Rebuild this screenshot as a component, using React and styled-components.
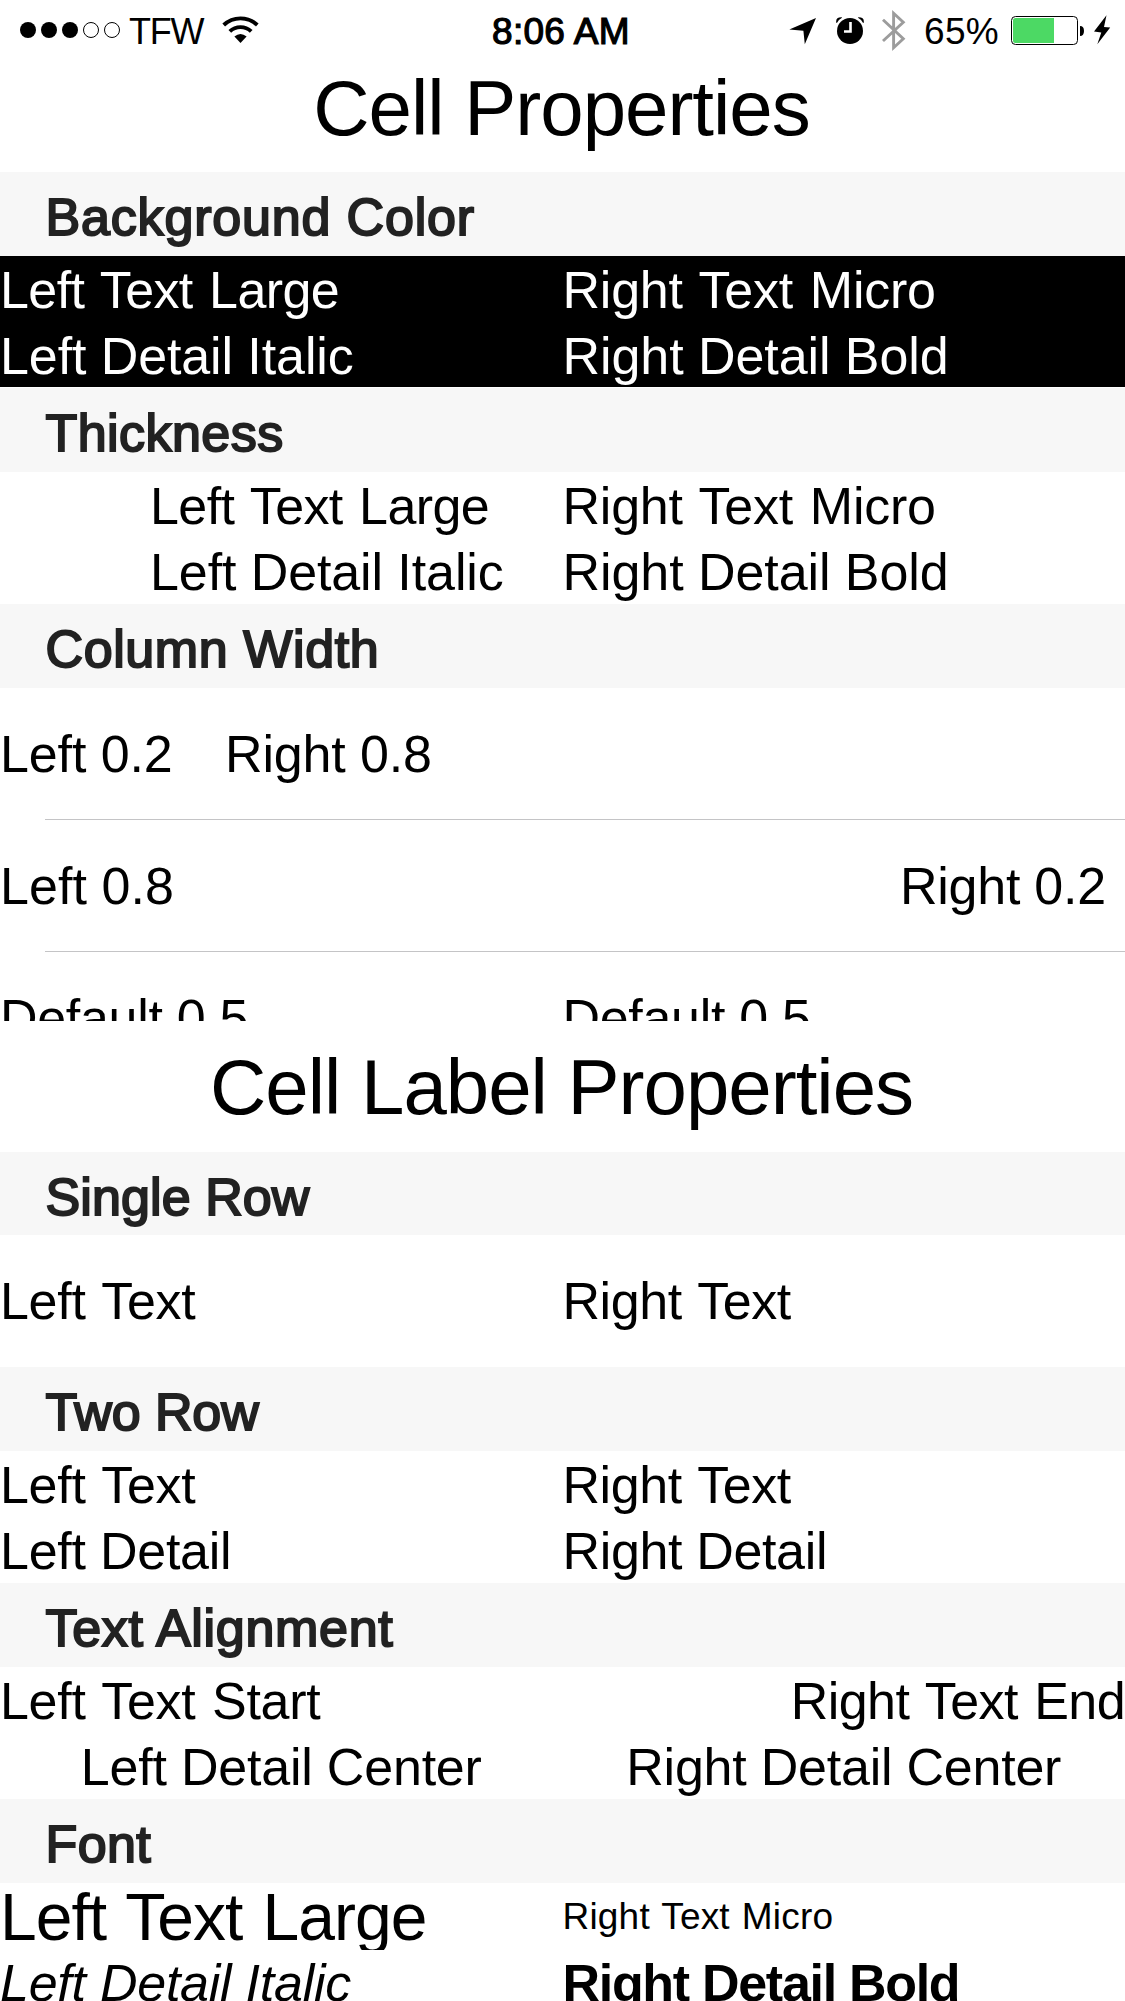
import React from "react";
import styled, { createGlobalStyle } from "styled-components";

const GlobalStyle = createGlobalStyle`
  * { box-sizing: border-box; }
  body {
    margin: 0;
    background: #fff;
    color: #000;
    font-family: "Liberation Sans", Arial, sans-serif;
  }
`;

const Screen = styled.main`
  width: 1125px;
  height: 2001px;
  overflow: hidden;
  background: #fff;
`;

/* ---------- status bar ---------- */

const StatusBar = styled.header`
  display: grid;
  grid-template-columns: 492px 1fr 336px;
  height: 60px;
`;

const StatusGroup = styled.div`
  display: flex;
  align-items: flex-start;
  padding-left: ${(p) => p.$start || 0}px;
`;

const StatusText = styled.span`
  padding-top: 2px;
  margin: 0 ${(p) => p.$after || 0}px 0 0;
  font-size: ${(p) => p.$size || 37}px;
  line-height: 60px;
  -webkit-text-stroke: ${(p) => (p.$medium ? 1.2 : 0)}px currentColor;
  letter-spacing: ${(p) => p.$track || 0}px;
  white-space: nowrap;
`;

const Glyph = styled.svg`
  display: block;
  flex: none;
  height: 60px;
  margin-right: ${(p) => p.$after || 0}px;
`;

function Icon({ x, width, after, children }) {
  return (
    <Glyph width={width} viewBox={`${x} 0 ${width} 60`} $after={after}>
      {children}
    </Glyph>
  );
}

function Signal() {
  return (
    <Icon x={20} width={101} after={8}>
      {[28, 49, 70].map((cx) => (
        <circle key={cx} cx={cx} cy="30" r="8" />
      ))}
      {[91, 112].map((cx) => (
        <circle key={cx} cx={cx} cy="30" r="7.5" fill="none" stroke="#000" strokeWidth="1" />
      ))}
    </Icon>
  );
}

function Wifi() {
  return (
    <Icon x={221} width={39}>
      <path
        d="M223.7 25A24.5 24.5 0 0 1 257.3 25M229.8 31.4A15.5 15.5 0 0 1 251.2 31.4"
        fill="none"
        stroke="#000"
        strokeWidth="3.9"
      />
      <path d="M234.4 36.6Q240.5 31.6 246.6 36.6L240.5 43Z" />
    </Icon>
  );
}

function LocationArrow() {
  return (
    <Icon x={789} width={28} after={19}>
      <path d="M816 18L789.3 29.6L803.4 30.7L804.8 44.2Z" />
    </Icon>
  );
}

function Alarm() {
  return (
    <Icon x={836} width={29} after={17}>
      <circle cx="850" cy="31" r="13" />
      <path d="M836.3 22.7Q835.3 17 841.7 17.2L842 17.8Q838.5 19.7 836.9 22.9ZM863.7 22.7Q864.7 17 858.3 17.2L858 17.8Q861.5 19.7 863.1 22.9Z" />
      <path d="M850.5 22V31.5H844" fill="none" stroke="#fff" strokeWidth="2.6" />
    </Icon>
  );
}

function Bluetooth() {
  return (
    <Icon x={882} width={24} after={18}>
      <path
        d="M883 19.7L903.3 38.8L893.6 47.8V13.2L903.3 22.2L883 41"
        fill="none"
        stroke="#9c9c9c"
        strokeWidth="2.9"
      />
    </Icon>
  );
}

function Battery() {
  return (
    <Icon x={1011} width={74} after={9}>
      <rect x="1011.5" y="16.5" width="66" height="28" rx="4" fill="#fff" stroke="#000" strokeWidth="1" />
      <path d="M1015.5 18H1054V43H1015.5Q1013 43 1013 40.5V20.5Q1013 18 1015.5 18Z" fill="#4cd964" />
      <path d="M1080 26Q1084 26 1084 31Q1084 36 1080 36Z" />
    </Icon>
  );
}

function Bolt() {
  return (
    <Icon x={1094} width={17}>
      <path d="M1106.5 15.2L1094 31.5L1101.3 32.6L1097.3 44.3L1110.2 27.6L1104 27Z" />
    </Icon>
  );
}

/* ---------- tables ---------- */

const Pane = styled.section`
  height: ${(p) => p.$height}px;
  overflow: hidden;
`;

const Title = styled.h1`
  margin: 0;
  height: ${(p) => p.$height}px;
  line-height: ${(p) => p.$line}px;
  font-size: 78px;
  font-weight: 400;
  letter-spacing: -1px;
  text-indent: -2px;
  text-align: center;
  white-space: nowrap;
`;

const SectionHeader = styled.h2`
  margin: 0;
  height: ${(p) => p.$height || 84}px;
  padding: 3px 0 0 45.5px;
  background: #f7f7f7;
  color: #222;
  font-size: 52px;
  line-height: 84px;
  font-weight: 400;
  -webkit-text-stroke: 2px currentColor;
  letter-spacing: ${(p) => (p.$track === undefined ? 0.5 : p.$track)}px;
  white-space: nowrap;
`;

const Row = styled.div`
  display: grid;
  grid-template-columns: ${(p) => p.$left || 0.5}fr ${(p) => 1 - (p.$left || 0.5)}fr;
  height: 132px;
  padding-left: ${(p) => p.$inset || 0}px;
  background: #fff;
`;

const InvertedRow = styled(Row)`
  background: #000;
  color: #fff;
  border-bottom: 1px solid #fff;
`;

const InsetRow = styled(Row)`
  grid-template-columns: 412.5px 1fr;
`;

const Divider = styled.hr`
  position: relative;
  height: 1px;
  margin: -1px 0 0 45px;
  border: 0;
  background: #c4c4c6;
`;

const Cell = styled.div`
  display: flex;
  flex-direction: column;
  padding-top: ${(p) => (p.$single ? 0 : 1)}px;
  min-width: 0;
`;

const Label = styled.span`
  display: block;
  height: ${(p) => p.$height || 66}px;
  overflow: ${(p) => (p.$clip ? "hidden" : "visible")};
  font-size: ${(p) => p.$size || 52}px;
  line-height: ${(p) => p.$height || 66}px;
  font-weight: ${(p) => (p.$bold ? 700 : 400)};
  font-style: ${(p) => (p.$italic ? "italic" : "normal")};
  letter-spacing: ${(p) => (p.$track === undefined ? -0.25 : p.$track)}px;
  word-spacing: ${(p) => p.$gap || 0}px;
  text-align: ${(p) => p.$align || "left"};
  white-space: nowrap;
`;

const Detail = styled(Label)`
  height: 65px;
  line-height: 67px;
`;

function Single({ children, track, gap }) {
  return (
    <Cell $single>
      <Label $height={132} $track={track} $gap={gap}>{children}</Label>
    </Cell>
  );
}

export default function App() {
  return (
    <>
      <GlobalStyle />
      <Screen>
        <Pane $height={1021}>
          <StatusBar>
            <StatusGroup $start={20}>
              <Signal />
              <StatusText $size={36} $track={-1.3} $after={18}>TFW</StatusText>
              <Wifi />
            </StatusGroup>
            <StatusGroup>
              <StatusText $medium $track={0.3}>8:06 AM</StatusText>
            </StatusGroup>
            <StatusGroup>
              <LocationArrow />
              <Alarm />
              <Bluetooth />
              <StatusText $track={0.3} $after={12}>65%</StatusText>
              <Battery />
              <Bolt />
            </StatusGroup>
          </StatusBar>

          <Title $height={112} $line={96}>Cell Properties</Title>

          <SectionHeader $track={0.83}>Background Color</SectionHeader>
          <InvertedRow>
            <Cell>
              <Label $gap={2.5} $track={-0.6}>Left Text Large</Label>
              <Detail $track={-0.1}>Left Detail Italic</Detail>
            </Cell>
            <Cell>
              <Label $gap={2.5} $track={-0.22}>Right Text Micro</Label>
              <Detail $track={-0.07}>Right Detail Bold</Detail>
            </Cell>
          </InvertedRow>

          <SectionHeader $track={0.45}>Thickness</SectionHeader>
          <InsetRow $inset={150}>
            <Cell>
              <Label $gap={2.5} $track={-0.6}>Left Text Large</Label>
              <Detail $track={-0.1}>Left Detail Italic</Detail>
            </Cell>
            <Cell>
              <Label $gap={2.5} $track={-0.22}>Right Text Micro</Label>
              <Detail $track={-0.07}>Right Detail Bold</Detail>
            </Cell>
          </InsetRow>

          <SectionHeader $track={0.6}>Column Width</SectionHeader>
          <Row $left={0.2}>
            <Single track={-0.11}>Left 0.2</Single>
            <Single track={-0.15}>Right 0.8</Single>
          </Row>
          <Divider />
          <Row $left={0.8}>
            <Single track={0.05}>Left 0.8</Single>
            <Single track={-0.25}>Right 0.2</Single>
          </Row>
          <Divider />
          <Row>
            <Single track={-0.31}>Default 0.5</Single>
            <Single track={-0.31}>Default 0.5</Single>
          </Row>
        </Pane>

        <Pane $height={980}>
          <Title $height={131} $line={132}>Cell Label Properties</Title>

          <SectionHeader $height={83} $track={0.1}>Single Row</SectionHeader>
          <Row>
            <Single gap={2.5} track={-0.3}>Left Text</Single>
            <Single gap={2.5} track={-0.45}>Right Text</Single>
          </Row>

          <SectionHeader $track={-0.1}>Two Row</SectionHeader>
          <Row>
            <Cell>
              <Label $gap={2.5} $track={-0.3}>Left Text</Label>
              <Detail>Left Detail</Detail>
            </Cell>
            <Cell>
              <Label $gap={2.5} $track={-0.45}>Right Text</Label>
              <Detail $track={-0.35}>Right Detail</Detail>
            </Cell>
          </Row>

          <SectionHeader $track={0.7}>Text Alignment</SectionHeader>
          <Row>
            <Cell>
              <Label $gap={2.5} $track={-0.3}>Left Text Start</Label>
              <Detail $align="center" $track={-0.21}>Left Detail Center</Detail>
            </Cell>
            <Cell>
              <Label $gap={2.5} $align="right" $track={-0.57}>Right Text End</Label>
              <Detail $align="center" $track={-0.23}>Right Detail Center</Detail>
            </Cell>
          </Row>

          <SectionHeader $track={0.4}>Font</SectionHeader>
          <Row>
            <Cell>
              <Label $size={66} $clip $gap={3} $track={-1}>Left Text Large</Label>
              <Detail $italic>Left Detail Italic</Detail>
            </Cell>
            <Cell>
              <Label $size={37} $gap={1.5} $track={0.2}>Right Text Micro</Label>
              <Detail $bold $track={-1.3}>Right Detail Bold</Detail>
            </Cell>
          </Row>
        </Pane>
      </Screen>
    </>
  );
}
